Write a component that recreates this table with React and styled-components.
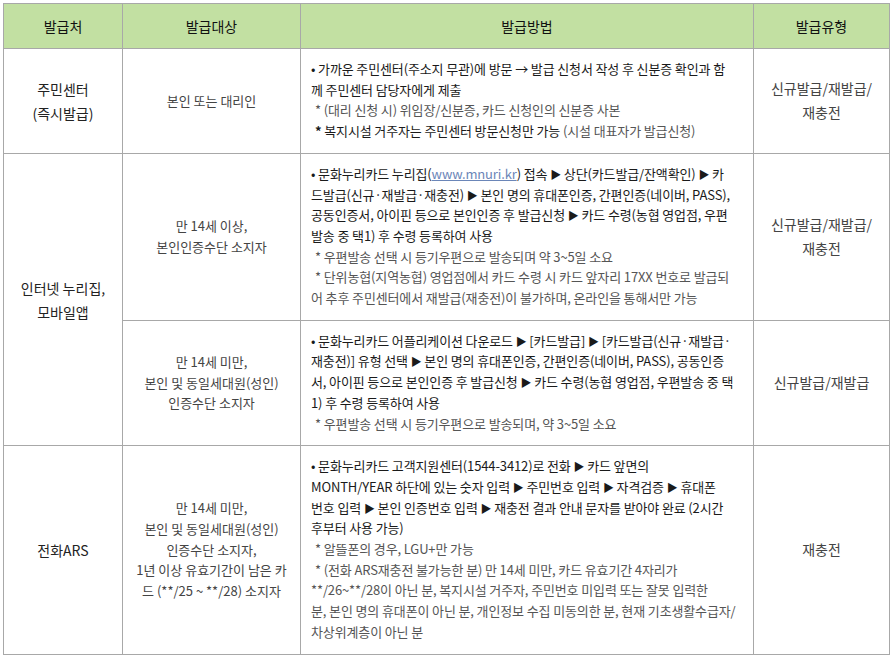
import styled, { createGlobalStyle } from 'styled-components';

const GlobalStyle = createGlobalStyle`
	html, body {
		margin: 0;
		padding: 0;
		background: #ffffff;
	}
	body {
		font-family: "Noto Sans CJK KR", "Noto Sans", sans-serif;
	}
`;

const Page = styled.div`
	padding: 3px 4px 3px 3px;
`;

const Table = styled.table`
	width: 886px;
	border-collapse: collapse;
	table-layout: fixed;
	border: 1px solid #a8a8a8;
`;

const Th = styled.th`
	height: 44px;
	padding: 0;
	background: #c2e0a2;
	border: 1px solid #a8a8a8;
	font-size: 14px;
	font-weight: 400;
	color: #111;
	text-align: center;
	vertical-align: middle;
`;

const Td = styled.td`
	border: 1px solid #a8a8a8;
	vertical-align: middle;
	text-align: ${(p) => (p.$left ? 'left' : 'center')};
	padding: ${(p) => (p.$left ? '10px 10px 11px 10px' : '10px 6px')};
	font-size: ${(p) => p.$size || 13}px;
	line-height: ${(p) => p.$lh || 20.7}px;
	color: ${(p) => p.$color || '#333'};
	letter-spacing: ${(p) => (p.$left ? '-0.01em' : '0')};
`;

const Line = styled.div`
	white-space: nowrap;
	color: ${(p) => (p.$note ? '#555' : '#1a1a1a')};
	padding-left: ${(p) => (p.$note ? '4px' : '0')};
`;

const Sub = styled.span`
	color: #555;
`;

const Dark = styled.span`
	color: #1a1a1a;
	font-weight: ${(p) => (p.$bold ? 700 : 400)};
`;

const Arrow = styled.span`
	font-size: 11px;
	color: #1a1a1a;
`;

const Link = styled.span`
	color: #6b86b8;
	text-decoration: underline;
`;

const Tri = () => <Arrow>▶</Arrow>;

export default function App() {
	return (
		<>
			<GlobalStyle />
			<Page>
				<Table>
					<colgroup>
						<col style={{ width: 119 }} />
						<col style={{ width: 178 }} />
						<col style={{ width: 453 }} />
						<col style={{ width: 136 }} />
					</colgroup>
					<thead>
						<tr>
							<Th>발급처</Th>
							<Th>발급대상</Th>
							<Th>발급방법</Th>
							<Th>발급유형</Th>
						</tr>
					</thead>
					<tbody>
						<tr>
							<Td $size={14} $lh={24} $color="#222">
								주민센터
								<br />
								(즉시발급)
							</Td>
							<Td $color="#444">본인 또는 대리인</Td>
							<Td $left>
								<Line>• 가까운 주민센터(주소지 무관)에 방문 → 발급 신청서 작성 후 신분증 확인과 함</Line>
								<Line>께 주민센터 담당자에게 제출</Line>
								<Line $note>* (대리 신청 시) 위임장/신분증, 카드 신청인의 신분증 사본</Line>
								<Line $note>
									<Dark $bold>*</Dark> <Dark>복지시설 거주자는 주민센터 방문신청만 가능</Dark> (시설 대표자가 발급신청)
								</Line>
							</Td>
							<Td $size={14} $lh={23.5} $color="#444">
								신규발급/재발급/
								<br />
								재충전
							</Td>
						</tr>
						<tr>
							<Td rowSpan={2} $size={14} $lh={24} $color="#222">
								인터넷 누리집,
								<br />
								모바일앱
							</Td>
							<Td $color="#444">
								만 14세 이상,
								<br />
								본인인증수단 소지자
							</Td>
							<Td $left>
								<Line>
									• 문화누리카드 누리집(<Link>www.mnuri.kr</Link>) 접속 <Tri /> 상단(카드발급/잔액확인) <Tri /> 카
								</Line>
								<Line>
									드발급(신규·재발급·재충전) <Tri /> 본인 명의 휴대폰인증, 간편인증(네이버, PASS),
								</Line>
								<Line>
									공동인증서, 아이핀 등으로 본인인증 후 발급신청 <Tri /> 카드 수령(농협 영업점, 우편
								</Line>
								<Line>발송 중 택1) 후 수령 등록하여 사용</Line>
								<Line $note>* 우편발송 선택 시 등기우편으로 발송되며 약 3~5일 소요</Line>
								<Line $note>* 단위농협(지역농협) 영업점에서 카드 수령 시 카드 앞자리 17XX 번호로 발급되</Line>
								<Line>
									<Sub>어 추후 주민센터에서 재발급(재충전)이 불가하며, 온라인을 통해서만 가능</Sub>
								</Line>
							</Td>
							<Td $size={14} $lh={23.5} $color="#444">
								신규발급/재발급/
								<br />
								재충전
							</Td>
						</tr>
						<tr>
							<Td $color="#444">
								만 14세 미만,
								<br />
								본인 및 동일세대원(성인)
								<br />
								인증수단 소지자
							</Td>
							<Td $left>
								<Line>
									• 문화누리카드 어플리케이션 다운로드 <Tri /> [카드발급] <Tri /> [카드발급(신규·재발급·
								</Line>
								<Line>
									재충전)] 유형 선택 <Tri /> 본인 명의 휴대폰인증, 간편인증(네이버, PASS), 공동인증
								</Line>
								<Line>
									서, 아이핀 등으로 본인인증 후 발급신청 <Tri /> 카드 수령(농협 영업점, 우편발송 중 택
								</Line>
								<Line>1) 후 수령 등록하여 사용</Line>
								<Line $note>* 우편발송 선택 시 등기우편으로 발송되며, 약 3~5일 소요</Line>
							</Td>
							<Td $size={14} $lh={23.5} $color="#444">
								신규발급/재발급
							</Td>
						</tr>
						<tr>
							<Td $size={14} $lh={24} $color="#222">
								전화ARS
							</Td>
							<Td $color="#444">
								만 14세 미만,
								<br />
								본인 및 동일세대원(성인)
								<br />
								인증수단 소지자,
								<br />
								1년 이상 유효기간이 남은 카
								<br />
								드 (**/25 ~ **/28) 소지자
							</Td>
							<Td $left>
								<Line>
									• 문화누리카드 고객지원센터(1544-3412)로 전화 <Tri /> 카드 앞면의
								</Line>
								<Line>
									MONTH/YEAR 하단에 있는 숫자 입력 <Tri /> 주민번호 입력 <Tri /> 자격검증 <Tri /> 휴대폰
								</Line>
								<Line>
									번호 입력 <Tri /> 본인 인증번호 입력 <Tri /> 재충전 결과 안내 문자를 받아야 완료 (2시간
								</Line>
								<Line>후부터 사용 가능)</Line>
								<Line $note>* 알뜰폰의 경우, LGU+만 가능</Line>
								<Line $note>* (전화 ARS재충전 불가능한 분) 만 14세 미만, 카드 유효기간 4자리가</Line>
								<Line>
									<Sub>**/26~**/28이 아닌 분, 복지시설 거주자, 주민번호 미입력 또는 잘못 입력한</Sub>
								</Line>
								<Line>
									<Sub>분, 본인 명의 휴대폰이 아닌 분, 개인정보 수집 미동의한 분, 현재 기초생활수급자/</Sub>
								</Line>
								<Line>
									<Sub>차상위계층이 아닌 분</Sub>
								</Line>
							</Td>
							<Td $size={14} $lh={23.5} $color="#444">
								재충전
							</Td>
						</tr>
					</tbody>
				</Table>
			</Page>
		</>
	);
}
